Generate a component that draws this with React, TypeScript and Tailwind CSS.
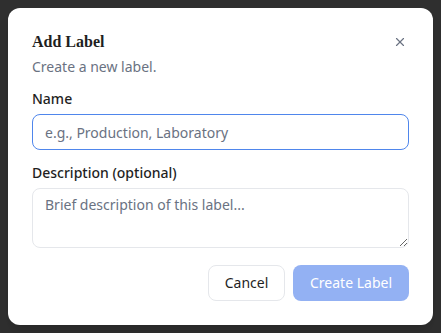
import { X } from 'lucide-react';

export default function App() {
  return (
    <div className="min-h-screen w-full bg-[#2f2f2f] p-2" style={{ fontFamily: '"Noto Sans", sans-serif' }}>
      <div className="relative w-[425px] rounded-xl bg-white px-6 pt-6 pb-6 shadow-lg">
        <button className="absolute right-[26px] top-[27px] flex items-center justify-center text-gray-500">
          <X size={14} strokeWidth={2} />
        </button>

        <h2 className="text-base font-bold leading-5 text-[#1f1f1f]" style={{ fontFamily: '"Liberation Serif", serif' }}>
          Add Label
        </h2>
        <p className="mt-[5px] text-sm leading-5 text-gray-500">Create a new label.</p>

        <div className="mt-[12px]">
          <label className="block text-sm font-medium leading-5 text-[#1f1f1f]">Name</label>
          <input
            className="mt-[5px] h-9 w-full rounded-lg border border-[#4f86ec] px-3 text-sm text-gray-800 outline-none placeholder:text-gray-500"
            placeholder="e.g., Production, Laboratory"
          />
        </div>

        <div className="mt-[13px]">
          <label className="block text-sm font-medium leading-5 text-[#1f1f1f]">Description (optional)</label>
          <textarea
            className="mt-[5px] block h-[60px] w-full resize-y rounded-lg border border-gray-200 px-3 py-[6px] text-sm text-gray-800 outline-none placeholder:text-gray-500"
            placeholder="Brief description of this label..."
          />
        </div>

        <div className="mt-[17px] flex justify-end gap-2">
          <button className="h-9 w-[77px] rounded-lg border border-gray-200 bg-white text-sm text-[#1f1f1f]">
            Cancel
          </button>
          <button className="h-9 w-[116px] rounded-lg bg-[#93b1f3] text-sm text-white">
            Create Label
          </button>
        </div>
      </div>
    </div>
  );
}
